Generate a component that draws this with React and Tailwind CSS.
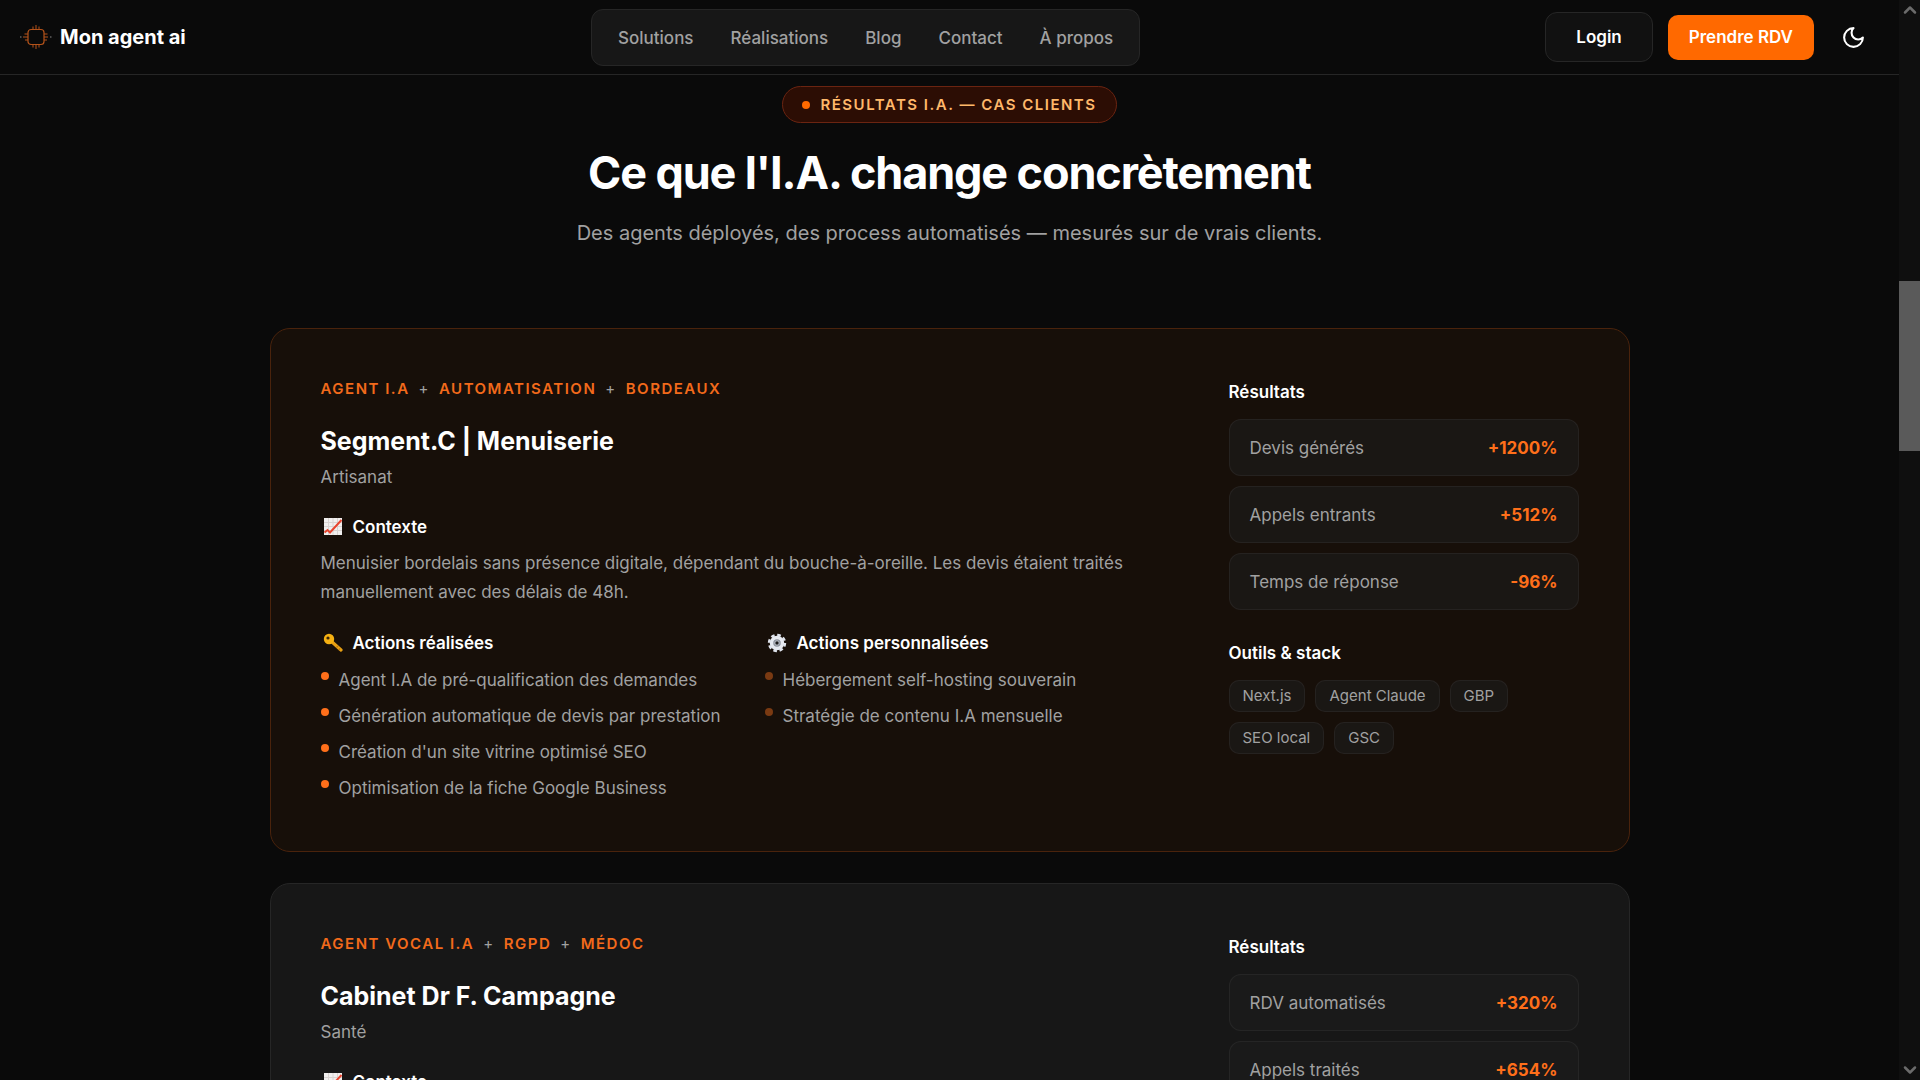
import React from 'react';
import { ChevronDown, ChevronUp } from 'lucide-react';

const navLinks = ['Solutions', 'Réalisations', 'Blog', 'Contact', 'À propos'];

const cases = [
  {
    id: 'segment-c',
    featured: true,
    tags: ['Agent I.A', 'Automatisation', 'Bordeaux'],
    name: 'Segment.C | Menuiserie',
    sector: 'Artisanat',
    context:
      'Menuisier bordelais sans présence digitale, dépendant du bouche-à-oreille. Les devis étaient traités manuellement avec des délais de 48h.',
    actions: [
      'Agent I.A de pré-qualification des demandes',
      'Génération automatique de devis par prestation',
      "Création d'un site vitrine optimisé SEO",
      'Optimisation de la fiche Google Business',
    ],
    custom: ['Hébergement self-hosting souverain', 'Stratégie de contenu I.A mensuelle'],
    results: [
      { label: 'Devis générés', value: '+1200%' },
      { label: 'Appels entrants', value: '+512%' },
      { label: 'Temps de réponse', value: '-96%' },
    ],
    stack: ['Next.js', 'Agent Claude', 'GBP', 'SEO local', 'GSC'],
  },
  {
    id: 'dr-campagne',
    featured: false,
    tags: ['Agent vocal I.A', 'RGPD', 'Médoc'],
    name: 'Cabinet Dr F. Campagne',
    sector: 'Santé',
    results: [
      { label: 'RDV automatisés', value: '+320%' },
      { label: 'Appels traités', value: '+654%' },
    ],
  },
];

function Logo() {
  return (
    <svg viewBox="0 0 32 32" className="size-8" fill="none" stroke="#b4531a" aria-hidden="true">
      <rect x="8" y="8.500" width="16" height="15" rx="3" strokeWidth="1.200" />
      <path d="M13 8V5.500M16 8V4M19 8V5.500M13 24v2.500M16 24v4M19 24v2.500" strokeWidth="1" />
      <path d="M8 13H4.500M8 16H3M8 19H5M24 13h3.500M24 16h4M24 19h3" strokeWidth="1" />
      <path d="M0 16h1.500M30 16h1.500" stroke="#8a8a8a" strokeWidth="1" />
    </svg>
  );
}

function MoonIcon() {
  return (
    <svg
      viewBox="0 0 24 24"
      className="size-[25px]"
      fill="none"
      stroke="currentColor"
      strokeWidth="2"
      strokeLinecap="round"
      strokeLinejoin="round"
      aria-hidden="true"
    >
      <path d="M12 3a6 6 0 0 0 9 9 9 9 0 1 1-9-9Z" />
    </svg>
  );
}

function ChartIcon() {
  return (
    <svg viewBox="0 0 20 20" className="size-5" aria-hidden="true">
      <rect x="1" y="1" width="18" height="17" fill="#f1efee" />
      <path d="M5.500 1v17M10 1v17M14.500 1v17M1 5.500h18M1 9.500h18M1 13.500h18" stroke="#d9d4d2" />
      <path d="M1.500 15.500l3-2.500 2.500 2.500L18.500 3" fill="none" stroke="#e8452f" strokeWidth="2" />
    </svg>
  );
}

function KeyIcon() {
  return (
    <svg viewBox="0 0 20 20" className="size-5" aria-hidden="true">
      <path d="M8.500 8.500l9.500 8.500" stroke="#e8a013" strokeWidth="3.200" strokeLinecap="round" />
      <path d="M13.500 14.500l1.500-1.500M15.500 17l1.500-1.500" stroke="#c07c0c" strokeWidth="1.500" />
      <circle cx="6" cy="6" r="5.200" fill="#f5b012" />
      <circle cx="5" cy="5" r="1.600" fill="#3a2508" />
    </svg>
  );
}

function GearIcon() {
  return (
    <svg viewBox="0 0 20 20" className="size-5" aria-hidden="true">
      <circle cx="10" cy="10" r="8" fill="none" stroke="#dfe3ec" strokeWidth="2.400" strokeDasharray="3.600 2.683" />
      <circle cx="10" cy="10" r="5.500" fill="#8d929c" stroke="#e6e9f0" strokeWidth="3.500" />
      <circle cx="10" cy="10" r="2.200" fill="#1b1a1a" stroke="#c3c7d0" />
    </svg>
  );
}

function SubTitle({ icon, children }) {
  return (
    <h4 className="flex items-center gap-2.5 pl-0.5 font-semibold leading-[26px] text-white">
      {icon}
      {children}
    </h4>
  );
}

function BulletList({ items, dim }) {
  return (
    <ul className="mt-[11px] space-y-2.5">
      {items.map((item) => (
        <li key={item} className="flex items-start gap-2.5 leading-[26px]">
          <span className={`mt-[5px] size-2 shrink-0 rounded-full ${dim ? 'bg-[#7a3a12]' : 'bg-[#ff6f1a]'}`} />
          {item}
        </li>
      ))}
    </ul>
  );
}

function CaseCard({ item }) {
  return (
    <article
      className={`grid grid-cols-[1fr_350px] gap-[50px] rounded-[20px] border p-[50px] ${
        item.featured ? 'border-[#4a230c] bg-[#170f09]' : 'border-[#262626] bg-[#171717]'
      }`}
    >
      <div>
        <p className="flex items-center gap-[9px] text-[15px] font-semibold uppercase leading-5 tracking-widest text-[#f26a1b]">
          {item.tags.map((tag, i) => (
            <React.Fragment key={tag}>
              {i > 0 && <span className="font-normal text-[#a1a1a1]">+</span>}
              <span>{tag}</span>
            </React.Fragment>
          ))}
        </p>
        <h3 className="mt-[26px] text-[25px] font-bold leading-8 text-white">{item.name}</h3>
        <p className="mt-[7px] leading-[26px]">{item.sector}</p>

        <div className="mt-6">
          <SubTitle icon={<ChartIcon />}>Contexte</SubTitle>
          {item.context && <p className="mt-[9px] leading-[29px]">{item.context}</p>}
        </div>

        {item.actions && (
          <div className="mt-[23px] grid grid-cols-2 gap-[30px]">
            <div>
              <SubTitle icon={<KeyIcon />}>Actions réalisées</SubTitle>
              <BulletList items={item.actions} />
            </div>
            <div>
              <SubTitle icon={<GearIcon />}>Actions personnalisées</SubTitle>
              <BulletList items={item.custom} dim />
            </div>
          </div>
        )}
      </div>

      <div>
        <h4 className="font-semibold leading-[26px] text-white">Résultats</h4>
        <dl className="mt-3.5 space-y-2.5">
          {item.results.map((result) => (
            <div
              key={result.label}
              className="flex items-center justify-between rounded-xl border border-white/5 bg-[#1c1c1c]/60 px-5 pt-[15px] pb-[13px] leading-[27px]"
            >
              <dt>{result.label}</dt>
              <dd className="font-bold text-[#ff6f1a]">{result.value}</dd>
            </div>
          ))}
        </dl>

        {item.stack && (
          <>
            <h4 className="mt-[30px] font-semibold leading-[26px] text-white">Outils &amp; stack</h4>
            <ul className="mt-3.5 flex flex-wrap gap-2.5">
              {item.stack.map((tool) => (
                <li
                  key={tool}
                  className="rounded-[10px] border border-white/5 bg-[#1c1c1c]/60 px-[13px] py-1 text-[15px] leading-[22px]"
                >
                  {tool}
                </li>
              ))}
            </ul>
          </>
        )}
      </div>
    </article>
  );
}

export default function App() {
  return (
    <div className="flex h-screen overflow-hidden bg-[#0a0a0a] font-['Inter',sans-serif] text-[17px] text-[#a1a1a1]">
      <div className="min-w-0 flex-1">
        <header className="flex h-[75px] items-center justify-between border-b border-[#262626] px-5">
          <a href="#" className="flex items-center gap-2 text-[20px] font-bold text-white">
            <Logo />
            Mon agent ai
          </a>

          <nav className="flex gap-[37px] rounded-xl border border-[#262626] bg-[#171717] px-[26px] pt-[15px] pb-[13px] font-medium leading-[27px]">
            {navLinks.map((link) => (
              <a key={link} href="#">
                {link}
              </a>
            ))}
          </nav>

          <div className="flex items-center gap-[15px] font-semibold leading-[27px] text-white">
            <button className="h-[50px] rounded-xl border border-[#262626] bg-[#111111] px-[30px]">Login</button>
            <button className="h-[45px] rounded-[10px] bg-[#ff6900] px-[21px]">Prendre RDV</button>
            <button className="flex size-[50px] items-center justify-center" aria-label="Changer de thème">
              <MoonIcon />
            </button>
          </div>
        </header>

        <main className="mx-auto max-w-[1360px] pt-[11px]">
          <div className="flex flex-col items-center">
            <span className="flex items-center gap-2.5 rounded-full border border-[#6b2411] bg-[#2c0d04] px-[19px] py-[7px] text-[15px] font-semibold uppercase leading-[21px] tracking-widest text-[#ffb86a]">
              <span className="size-2 rounded-full bg-[#ff6900]" />
              Résultats I.A. — cas clients
            </span>
            <h2 className="mt-[25px] text-[45px] font-bold leading-[50px] tracking-tight text-white">
              Ce que l'I.A. change concrètement
            </h2>
            <p className="mt-5 text-[20px] leading-[30px]">
              Des agents déployés, des process automatisés — mesurés sur de vrais clients.
            </p>
          </div>

          <div className="mt-20 space-y-[31px]">
            {cases.map((item) => (
              <CaseCard key={item.id} item={item} />
            ))}
          </div>
        </main>
      </div>

      {/* Scroll rail */}
      <div className="flex w-[21px] flex-col items-center bg-[#0f0f0f] text-[#6b6b6b]" aria-hidden="true">
        <ChevronUp className="size-5" strokeWidth={3} />
        <div className="mt-[261px] h-[170px] w-full bg-[#5a5a5a]" />
        <ChevronDown className="mt-auto size-5" strokeWidth={3} />
      </div>
    </div>
  );
}
